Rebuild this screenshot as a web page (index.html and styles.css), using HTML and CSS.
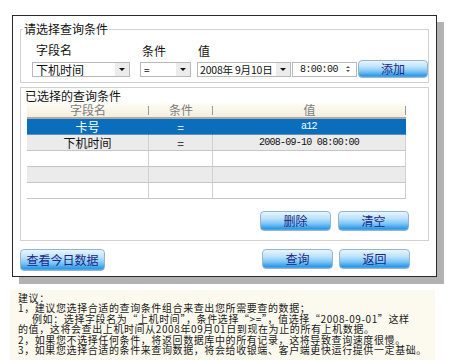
FILE: index.html
```html
<!DOCTYPE html>
<html lang="zh-CN">
<head>
<meta charset="utf-8">
<title>查询条件</title>
<link rel="stylesheet" href="styles.css">
</head>
<body>
<div class="page">
  <div class="panel">
    <fieldset class="cond-group">
      <legend>请选择查询条件</legend>
      <div class="labels">
        <span class="lbl lbl-field">字段名</span>
        <span class="lbl lbl-op">条件</span>
        <span class="lbl lbl-val">值</span>
      </div>
      <div class="controls">
        <div class="select sel-field"><span class="sel-text">下机时间</span><span class="drop"><i class="tri"></i></span></div>
        <div class="select sel-op"><span class="sel-text small">=</span><span class="drop"><i class="tri"></i></span></div>
        <div class="select sel-date"><span class="sel-text date-text">2008年 9月10日</span><span class="drop"><i class="tri"></i></span></div>
        <div class="select sel-time"><span class="sel-text time-text">8:00:00</span><span class="spin"><i class="tri-up"></i><i class="tri-dn"></i></span></div>
        <div class="btn btn-add">添加</div>
      </div>
    </fieldset>

    <div class="list-group">
      <div class="group-title">已选择的查询条件</div>
      <div class="table">
        <div class="row head">
          <div class="cell">字段名</div>
          <div class="cell">条件</div>
          <div class="cell">值</div>
        </div>
        <div class="row selected">
          <div class="cell">卡号</div>
          <div class="cell">=</div>
          <div class="cell mono">a12</div>
        </div>
        <div class="row alt">
          <div class="cell">下机时间</div>
          <div class="cell">=</div>
          <div class="cell mono">2008-09-10 08:00:00</div>
        </div>
        <div class="row">
          <div class="cell"></div><div class="cell"></div><div class="cell"></div>
        </div>
        <div class="row alt">
          <div class="cell"></div><div class="cell"></div><div class="cell"></div>
        </div>
        <div class="row">
          <div class="cell"></div><div class="cell"></div><div class="cell"></div>
        </div>
      </div>
      <div class="btn-row">
        <div class="btn btn-std">删除</div>
        <div class="btn btn-std">清空</div>
      </div>
    </div>

    <div class="actions">
      <div class="btn btn-today">查看今日数据</div>
      <div class="right-actions">
        <div class="btn btn-std">查询</div>
        <div class="btn btn-std">返回</div>
      </div>
    </div>
  </div>

  <div class="notes">
    <div class="line">建议：</div>
    <div class="line">1，建议您选择合适的查询条件组合来查出您所需要查的数据；</div>
    <div class="line indent">例如：选择字段名为“上机时间”，条件选择“&gt;=”，值选择“2008-09-01”这样</div>
    <div class="line">的值，这将会查出上机时间从2008年09月01日到现在为止的所有上机数据。</div>
    <div class="line">2，如果您不选择任何条件，将返回数据库中的所有记录，这将导致查询速度很慢。</div>
    <div class="line">3，如果您选择合适的条件来查询数据，将会给收银端、客户端更快运行提供一定基础。</div>
  </div>
</div>
</body>
</html>
```

FILE: styles.css
```css
* { box-sizing: border-box; }
html, body { margin: 0; padding: 0; }
body {
  width: 450px;
  height: 360px;
  overflow: hidden;
  background: #fff;
  color: #000;
  font-family: "Noto Sans CJK SC", "Liberation Sans", sans-serif;
  font-size: 12px;
}
.page { padding: 15px 0 0 10px; }

.panel {
  margin-left: 2px;
  width: 425px;
  height: 262px;
  border: 1px solid #2b2b2b;
  background: #fff;
  box-shadow: 7px 7px 0 #b2b2b2;
  display: flex;
  flex-direction: column;
}

/* group 1 */
.cond-group {
  margin: 5px 7px 0 7px;
  width: 409px;
  min-width: 0;
  padding: 6px 0 4px 11px;
  border: 1px solid #d2d2d2;
}
.cond-group legend {
  margin-left: -9px;
  padding: 0 1px;
  font-size: 12px;
  line-height: 16px;
  color: #111;
}
.labels {
  display: flex;
  height: 14px;
  line-height: 14px;
  margin-bottom: 3px;
  color: #111;
}
.lbl-field { width: 108px; padding-left: 4px; }
.lbl-op { width: 57px; padding-left: 2px; margin-top: 1px; }
.lbl-val { padding-left: 1px; margin-top: 1px; }

.controls {
  display: flex;
  align-items: center;
  height: 18px;
}
.select {
  display: flex;
  align-items: center;
  height: 15px;
  border: 1px solid #b9b9b9;
  background: #fff;
}
.sel-text {
  flex: 1;
  min-width: 0;
  padding-left: 3px;
  font-size: 12px;
  line-height: 13px;
  white-space: nowrap;
  color: #111;
}
.sel-text.small { font-size: 10px; }
.date-text { font-size: 10.5px; padding-left: 2px; letter-spacing: -0.2px; }
.time-text {
  font-family: "Liberation Mono", monospace;
  font-size: 10px;
  padding-left: 7px;
  letter-spacing: -0.6px;
}
.drop {
  flex: none;
  width: 14px;
  height: 13px;
  background: #ececec;
  display: flex;
  align-items: center;
  justify-content: center;
}
.tri {
  width: 0; height: 0;
  border-left: 3px solid transparent;
  border-right: 3px solid transparent;
  border-top: 3px solid #111;
}
.spin {
  flex: none;
  width: 12px;
  height: 13px;
  display: flex;
  flex-direction: column;
  align-items: center;
  justify-content: center;
  gap: 2px;
  margin-right: 2px;
}
.tri-up {
  width: 0; height: 0;
  border-left: 2px solid transparent;
  border-right: 2px solid transparent;
  border-bottom: 2px solid #555;
}
.tri-dn {
  width: 0; height: 0;
  border-left: 2px solid transparent;
  border-right: 2px solid transparent;
  border-top: 2px solid #555;
}
.sel-field { width: 98px; margin-right: 10px; }
.sel-op { width: 51px; margin-right: 6px; }
.sel-date { width: 94px; margin-right: 1px; }
.sel-time { width: 65px; margin-right: 1px; }

/* buttons */
.btn {
  display: flex;
  align-items: center;
  justify-content: center;
  border: 1px solid #97b4c9;
  border-radius: 4px;
  background: linear-gradient(#e6f5ff 0%, #bfe3fc 35%, #7cc6f6 65%, #2f98e6 92%, #5aaeea 100%);
  color: #1a2784;
  font-size: 12px;
  line-height: 14px;
  white-space: nowrap;
}
.btn-add { width: 70px; height: 18px; }
.btn-std { width: 71px; height: 20px; }
.btn-today { width: 85px; height: 22px; }

/* group 2 */
.list-group {
  margin: 4px 7px 0 7px;
  width: 409px;
  border: 1px solid #d2d2d2;
  padding: 1px 0 9px 0;
}
.group-title {
  padding-left: 4px;
  line-height: 14px;
  height: 14px;
  color: #111;
}
.table {
  margin-left: 6px;
  width: 379px;
}
.row {
  display: grid;
  grid-template-columns: 122px 64px 193px;
  height: 16px;
}
.row .cell {
  text-align: center;
  line-height: 15px;
  font-size: 12px;
  border-bottom: 1px solid #c6c6c6;
  border-right: 1px solid #cfcfcf;
  white-space: nowrap;
  color: #111;
}
.row.head .cell {
  color: #7d7d7d;
  border-bottom: 2px solid #aaaaaa;
  border-right: none;
  line-height: 14px;
  background:
    linear-gradient(#9a9a9a, #9a9a9a) right 3px / 1px 9px no-repeat,
    linear-gradient(#fefcf6, #f4eedc);
}
.row.selected .cell {
  background: #0b6ebd;
  color: #fff;
  border-right-color: #0b6ebd;
  border-bottom-color: #6b8fae;
}
.row.alt .cell { background: #ebebeb; }
.mono {
  font-family: "Liberation Mono", monospace;
  font-size: 10px !important;
  letter-spacing: -0.75px;
}

.btn-row {
  display: flex;
  justify-content: flex-end;
  gap: 7px;
  padding-right: 19px;
  margin-top: 12px;
}

.actions {
  display: flex;
  align-items: flex-start;
  justify-content: space-between;
  margin-top: 8px;
  padding: 0 26px 0 7px;
}
.right-actions { display: flex; gap: 6px; }

/* notes */
.notes {
  margin-top: 13px;
  width: 425px;
  height: 70px;
  background: #fcf9ee;
  padding: 3px 0 0 8px;
  color: #1a1a1a;
  font-size: 10px;
  letter-spacing: 0.6px;
  line-height: 10.4px;
}
.notes .line { white-space: nowrap; height: 10.4px; }
.notes .indent { padding-left: 14px; }
```
